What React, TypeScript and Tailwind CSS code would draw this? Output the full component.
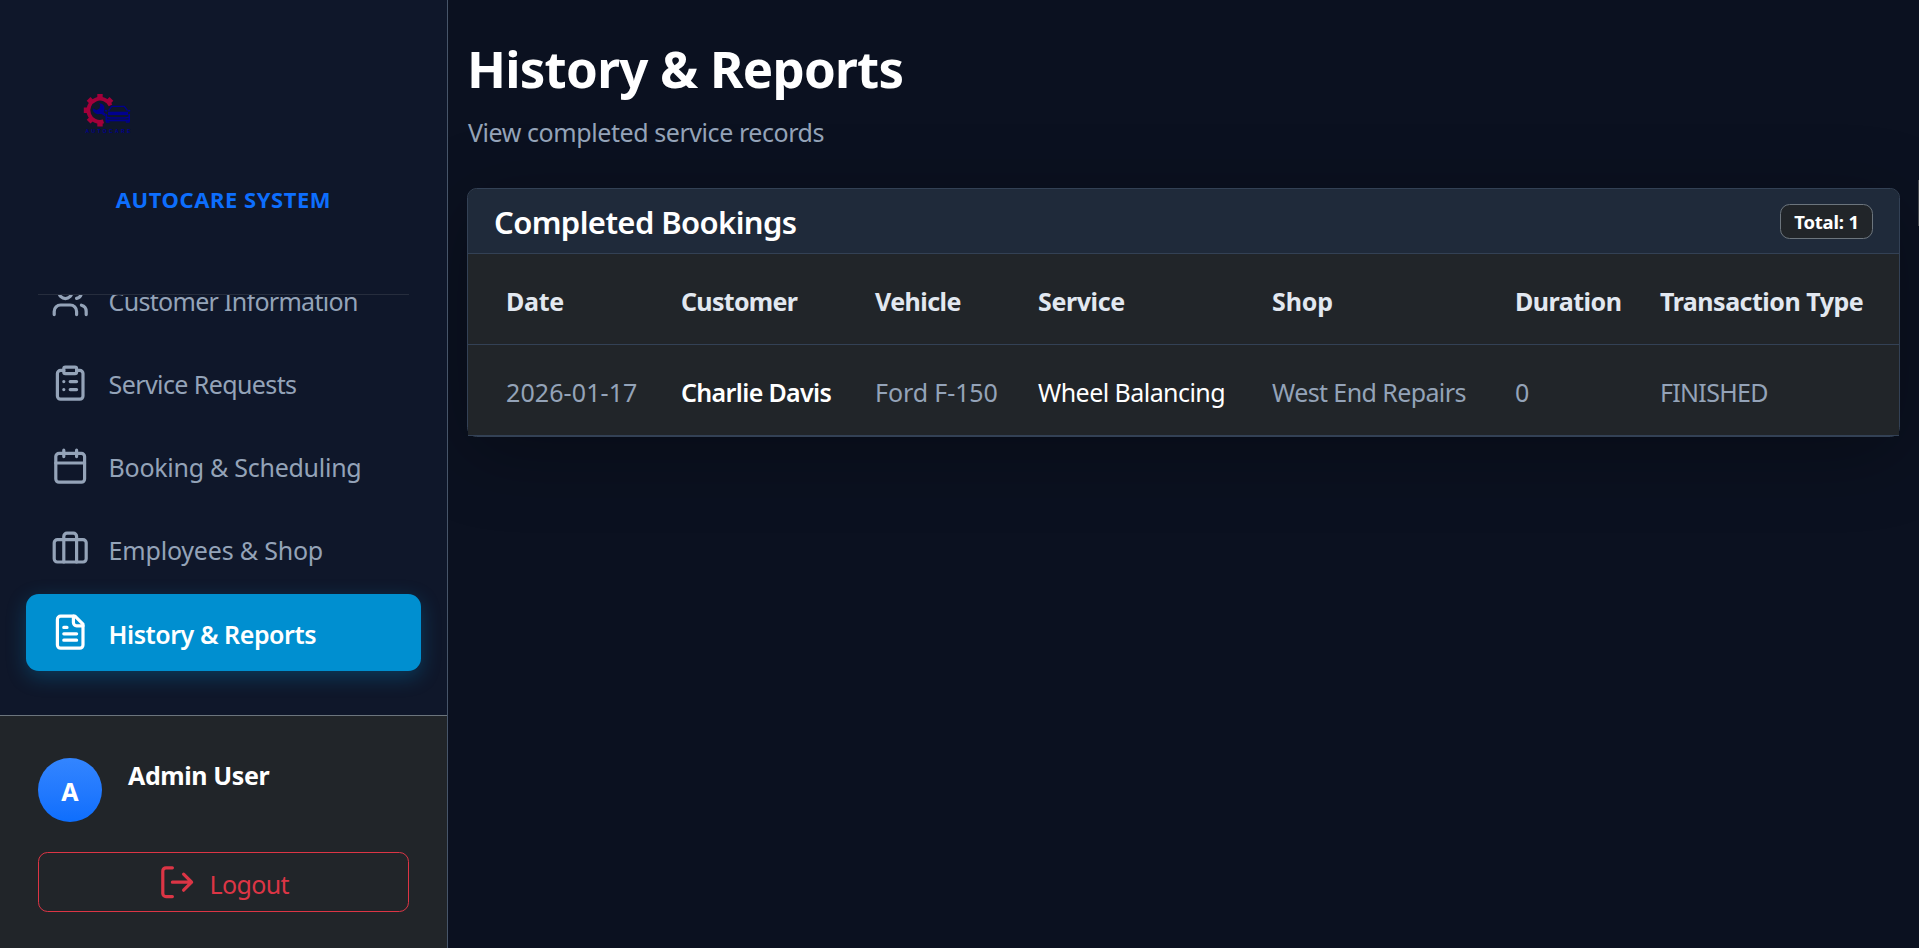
import type { ReactNode } from "react";

function Icon({ children }: { children: ReactNode }) {
  return (
    <svg
      className="size-[38.4px] shrink-0"
      viewBox="0 0 24 24"
      fill="none"
      stroke="currentColor"
      strokeWidth="2"
      strokeLinecap="round"
      strokeLinejoin="round"
    >
      {children}
    </svg>
  );
}

const navItems = [
  {
    label: "Customer Information",
    tracking: "tracking-[-0.7px]",
    active: false,
    icon: (
      <>
        <path d="M16 21v-2a4 4 0 0 0-4-4H6a4 4 0 0 0-4 4v2" />
        <circle cx="9" cy="7" r="4" />
        <path d="M22 21v-2a4 4 0 0 0-3-3.87" />
        <path d="M16 3.13a4 4 0 0 1 0 7.75" />
      </>
    ),
  },
  {
    label: "Service Requests",
    tracking: "tracking-[-0.6px]",
    active: false,
    icon: (
      <>
        <rect width="8" height="4" x="8" y="2" rx="1" />
        <path d="M16 4h2a2 2 0 0 1 2 2v14a2 2 0 0 1-2 2H6a2 2 0 0 1-2-2V6a2 2 0 0 1 2-2h2" />
        <path d="M12 11h4M12 16h4M8 11h.01M8 16h.01" />
      </>
    ),
  },
  {
    label: "Booking & Scheduling",
    tracking: "tracking-[-0.27px]",
    active: false,
    icon: (
      <>
        <path d="M8 2v4M16 2v4M3 10h18" />
        <rect width="18" height="18" x="3" y="4" rx="2" />
      </>
    ),
  },
  {
    label: "Employees & Shop",
    tracking: "tracking-[-0.2px]",
    active: false,
    icon: (
      <>
        <path d="M16 20V4a2 2 0 0 0-2-2h-4a2 2 0 0 0-2 2v16" />
        <rect width="20" height="14" x="2" y="6" rx="2" />
      </>
    ),
  },
  {
    label: "History & Reports",
    tracking: "tracking-[-0.45px]",
    active: true,
    icon: (
      <>
        <path d="M15 2H6a2 2 0 0 0-2 2v16a2 2 0 0 0 2 2h12a2 2 0 0 0 2-2V7Z" />
        <path d="M14 2v4a2 2 0 0 0 2 2h4" />
        <path d="M10 9H8M16 13H8M16 17H8" />
      </>
    ),
  },
];

function Logo() {
  return (
    <svg className="h-[46px] w-[54px]" viewBox="0 0 54 46">
      <g fill="none" stroke="#a3003a">
        <path d="M30.5 15.4A11.6 11.6 0 1 0 23.5 31.4" strokeWidth="3.8" />
        <path
          d="M20 32v4.4M11.5 28.8l-2.9 2.9M8 20.3H3.8M11.5 11.8 8.6 8.9M20 8.3V4.1M28.5 11.8l2.9-2.9"
          strokeWidth="5.4"
        />
      </g>
      <path
        d="M19 13.2a5.3 5.3 0 0 1 5 7.6l-1 3.2-3.6 0a5.3 5.3 0 0 1-6.6-5.8l3.6 2 3.2-1.8.6-3.4zM22 21l3.4 2.6v3L20 23z"
        fill="#00008f"
      />
      <g fill="none" stroke="#00008f">
        <path d="M28.5 20.6l3.2-4.2h12.6l3.2 4.2" strokeWidth="1.3" />
        <path d="M24.800 20.400l2.400.6M50.200 20.400l-2.400.6" strokeWidth="1.5" />
        <path d="M28 23.400h20" strokeWidth="3.400" />
        <path d="M26.300 24v7.800M49.200 24v7.800" strokeWidth="1.600" />
        <path d="M26.500 27.200l4 .9h14.500l4-.9" strokeWidth="1.500" />
        <path d="M26 30.400h23.500" strokeWidth="1.800" />
        <path d="M26 32h3.600M45.800 32h3.600" strokeWidth="1.600" />
      </g>
      <text x="5.400" y="43" fontSize="5" fontWeight="700" fontFamily="Liberation Sans, sans-serif" textLength="45" fill="#00008f">
        AUTOCARE
      </text>
    </svg>
  );
}

const columns = [
  { head: "Date", headTrack: "tracking-[-0.3px]", value: "2026-01-17", cell: "text-[#94a3b8] tracking-[0.1px]", width: "w-[175px]" },
  { head: "Customer", headTrack: "tracking-[-0.7px]", value: "Charlie Davis", cell: "text-white font-semibold tracking-[-0.65px]", width: "w-[194px]" },
  { head: "Vehicle", headTrack: "tracking-[-0.55px]", value: "Ford F-150", cell: "text-[#94a3b8] tracking-[-0.1px]", width: "w-[163px]" },
  { head: "Service", headTrack: "tracking-[-0.4px]", value: "Wheel Balancing", cell: "text-white tracking-[-0.55px]", width: "w-[234px]" },
  { head: "Shop", headTrack: "tracking-[-0.1px]", value: "West End Repairs", cell: "text-[#94a3b8] tracking-[-0.6px]", width: "w-[243px]" },
  { head: "Duration", headTrack: "tracking-[-0.5px]", value: "0", cell: "text-[#94a3b8]", width: "w-[145px]" },
  { head: "Transaction Type", headTrack: "tracking-[-0.5px]", value: "FINISHED", cell: "text-[#94a3b8] tracking-[-0.7px]", width: "w-[277px]" },
];

function Sidebar() {
  return (
    <aside className="relative z-10 flex h-full w-[448px] shrink-0 flex-col border-r border-[#475569] bg-[#0f172a]">
      <div className="mx-[38px] flex h-[295px] shrink-0 flex-col border-b border-[#262d3d] pt-[90px]">
        <div className="pl-[42px]">
          <Logo />
        </div>
        <div className="mt-[47px] text-center text-[22px] leading-8 font-bold tracking-[0.55px] text-[#0d6efd]">
          AUTOCARE SYSTEM
        </div>
      </div>
      <nav className="flex min-h-0 flex-1 flex-col justify-end gap-[6.4px] overflow-hidden px-[25.6px] pb-[44px]">
        {navItems.map((item) => (
          <a
            key={item.label}
            className={
              item.active
                ? "flex h-[76.8px] shrink-0 items-center gap-[19px] rounded-[12.8px] bg-[#008fd0] pl-[25.6px] font-semibold text-white shadow-[0_6px_20px_rgba(0,143,208,0.3)]"
                : "flex h-[76.8px] shrink-0 items-center gap-[19px] rounded-[12.8px] pl-[25.6px] text-[#94a3b8]"
            }
          >
            <Icon>{item.icon}</Icon>
            <span className={`pt-[2px] text-[25px] leading-8 whitespace-nowrap ${item.tracking}`}>{item.label}</span>
          </a>
        ))}
      </nav>
      <div className="h-[233px] shrink-0 border-t border-[#6c757d] bg-[#212529] px-[38px] pt-[42px]">
        <div className="flex gap-[26px]">
          <div className="flex size-16 items-center justify-center rounded-full bg-linear-to-b from-[#3385ff] to-[#0d6efd] pt-[3px] text-[25px] font-bold text-white">
            A
          </div>
          <div className="pt-px text-[25px] leading-8 font-bold tracking-[-0.4px] text-white">Admin User</div>
        </div>
        <button className="mt-[30px] flex h-[60px] w-[371px] items-center justify-center gap-[13px] rounded-[9.6px] border border-[#dc3545] text-[#dc3545]">
          <Icon>
            <path d="M9 21H5a2 2 0 0 1-2-2V5a2 2 0 0 1 2-2h4" />
            <path d="m16 17 5-5-5-5M21 12H9" />
          </Icon>
          <span className="pt-[3px] text-[25px] leading-8 tracking-[-0.6px]">Logout</span>
        </button>
      </div>
    </aside>
  );
}

export default function App() {
  return (
    <div className="relative flex h-[948px] w-[1919px] overflow-hidden bg-[#0b1120] font-['Noto_Sans',sans-serif]">
      <Sidebar />
      <main className="flex-1 pt-[34px] pr-[19px] pl-[19px]">
        <h1 className="text-[51px] leading-[68px] font-bold tracking-[-0.75px] text-white">History &amp; Reports</h1>
        <p className="mt-[12px] mb-[38px] pl-px text-[25px] leading-9 tracking-[-0.43px] text-[#94a3b8]">View completed service records</p>
        <section className="h-[249px] rounded-[9.6px] border border-[#334155] bg-[#212529] shadow-[0_16px_77px_rgba(0,0,0,0.3)]">
          <header className="flex h-[65px] items-center justify-between rounded-t-[8.6px] border-b border-[#334155] bg-[#1f2a3a] pr-[26px] pl-[26px]">
            <h2 className="pt-[2px] text-[31px] leading-9 font-semibold tracking-[-0.6px] text-white">Completed Bookings</h2>
            <span className="flex h-[35px] w-[93px] items-center justify-center rounded-[9.6px] border border-[#6c757d] bg-[#212529] pt-px text-[18.5px] font-bold tracking-[-0.2px] text-white">
              Total: 1
            </span>
          </header>
          <table className="w-full table-fixed border-separate border-spacing-0 bg-[#212529] text-left text-[25px] leading-8">
            <thead>
              <tr className="h-[91px] text-[#e2e8f0]">
                {columns.map((c) => (
                  <th key={c.head} className={`border-b border-[#334155] pt-[3px] pl-[38px] font-bold whitespace-nowrap ${c.width} ${c.headTrack}`}>
                    {c.head}
                  </th>
                ))}
              </tr>
            </thead>
            <tbody>
              <tr className="h-[91px]">
                {columns.map((c) => (
                  <td key={c.head} className={`border-b border-[#334155] pt-[3px] pl-[38px] whitespace-nowrap ${c.cell}`}>
                    {c.value}
                  </td>
                ))}
              </tr>
            </tbody>
          </table>
        </section>
      </main>
      <div className="absolute top-[180px] right-0 h-[46px] w-px bg-[#45484d]" />
    </div>
  );
}
